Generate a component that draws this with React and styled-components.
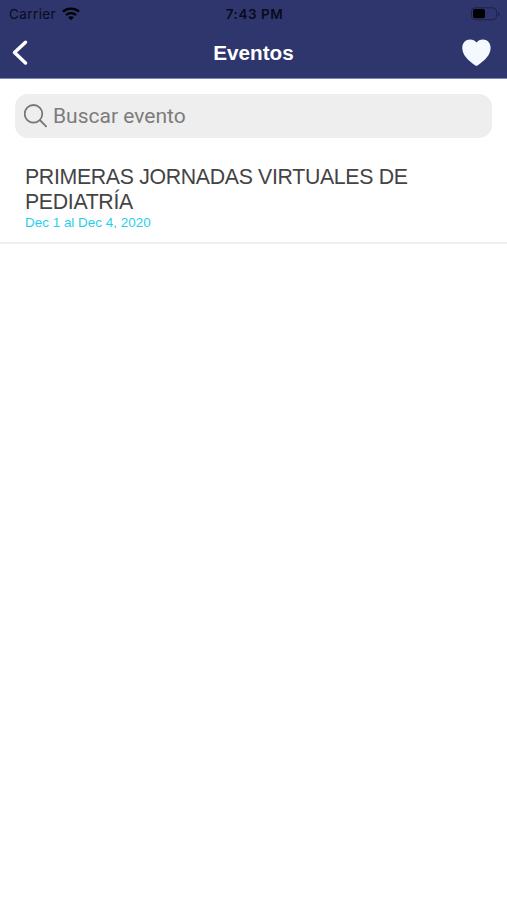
import { useState } from 'react';
import styled, { createGlobalStyle } from 'styled-components';

const GlobalStyle = createGlobalStyle`
  * {
    box-sizing: border-box;
  }
  body {
    margin: 0;
    background-color: #fff;
    font-family: 'Liberation Sans', Arial, sans-serif;
  }
`;

const Screen = styled.div`
  width: 100%;
  min-height: 100vh;
  background-color: #fff;
`;

const Header = styled.header`
  height: 79px;
  background-color: #2f366d;
  border-bottom: 1px solid #7e88b8;
`;

const StatusBar = styled.div`
  height: 27px;
  padding: 0 7px 0 9px;
  display: grid;
  grid-template-columns: 1fr auto 1fr;
  align-items: center;
  color: #080b1c;
  font-family: Inter, 'Liberation Sans', sans-serif;
  font-size: 13.5px;
`;

const Carrier = styled.div`
  display: flex;
  align-items: center;
  gap: 6px;
  letter-spacing: 0.4px;
`;

const Time = styled.div`
  font-size: 13.5px;
  font-weight: 600;
  letter-spacing: 0.55px;
`;

const Battery = styled.svg`
  justify-self: end;
`;

const NavBar = styled.div`
  height: 51px;
  padding: 0 16px 0 10px;
  display: grid;
  grid-template-columns: 1fr auto 1fr;
  align-items: center;
`;

const NavButton = styled.button`
  display: flex;
  padding: 0;
  border: 0;
  background: none;
  justify-self: ${(props) => props.$side};
`;

const Title = styled.h1`
  margin: 0;
  padding-left: 6px;
  padding-top: 1px;
  color: #fff;
  font-size: 20.7px;
  font-weight: bold;
  line-height: 24px;
`;

const SearchBox = styled.label`
  height: 44px;
  margin: 15px 15px 0;
  padding: 0 9px;
  display: flex;
  align-items: center;
  gap: 5px;
  background-color: #eee;
  border-radius: 13px;
`;

const SearchInput = styled.input`
  flex: 1;
  padding: 0;
  border: 0;
  outline: 0;
  background: none;
  color: #444;
  font-family: Roboto, sans-serif;
  font-size: 21px;
  &::placeholder {
    color: #7c7c7c;
  }
`;

const EventItem = styled.article`
  height: 106px;
  padding: 27px 60px 0 25px;
  border-bottom: 2px solid #eee;
`;

const EventName = styled.h2`
  margin: 0;
  color: #444;
  font-size: 21.3px;
  font-weight: normal;
  letter-spacing: -0.33px;
  line-height: 24.5px;
`;

const EventDate = styled.div`
  color: #1fd0ea;
  font-size: 13.4px;
  letter-spacing: 0.03px;
  line-height: 17px;
`;

const events = [
  {
    id: 1,
    name: 'PRIMERAS JORNADAS VIRTUALES DE PEDIATRÍA',
    date: 'Dec 1 al Dec 4, 2020',
  },
];

const App = () => {
  const [search, setSearch] = useState('');
  const shown = events.filter((e) =>
    e.name.toLowerCase().includes(search.toLowerCase())
  );
  return (
    <Screen>
      <GlobalStyle />
      <Header>
        <StatusBar>
          <Carrier>
            Carrier
            <svg width="18" height="14" viewBox="0 0 18 14" fill="none">
              <path
                d="M1 4.600C5.500.600 12.500.600 17 4.600M4 8c2.800-2.600 7.200-2.600 10 0"
                stroke="#000"
                strokeWidth="2.3"
              />
              <path d="M9 13.2 6.200 10.300c1.600-1.500 4-1.500 5.600 0z" fill="#000" />
            </svg>
          </Carrier>
          <Time>7:43 PM</Time>
          <Battery width="30" height="14" viewBox="0 0 30 14">
            <rect
              x="1.5"
              y="0.8"
              width="25"
              height="12"
              rx="3.5"
              fill="none"
              stroke="#1d2249"
            />
            <rect x="3" y="2" width="12" height="9.200" rx="2" fill="#000" />
            <path d="M28 5v4.400c1-.4 1.600-1.200 1.600-2.200S29 5.400 28 5z" fill="#1d2249" />
          </Battery>
        </StatusBar>
        <NavBar>
          <NavButton $side="start" aria-label="Volver">
            <svg width="20" height="28" viewBox="0 0 20 28" fill="none">
              <path
                d="M15.500 3.300 4.500 13.500 15.500 24"
                stroke="#fff"
                strokeWidth="3.500"
                strokeLinecap="round"
                strokeLinejoin="round"
              />
            </svg>
          </NavButton>
          <Title>Eventos</Title>
          <NavButton $side="end" aria-label="Favoritos">
            <svg width="30" height="28" viewBox="0 0 30 28">
              <path
                d="M15.500 3.600C14 1.600 11.800.600 9.200.600 4.700.600 1.300 4 1.300 9c0 7.200 6.200 12.600 12.700 17.200.9.700 1.900.7 2.800 0C23.400 21.600 29.600 16.200 29.600 9c0-5-3.400-8.400-7.800-8.400-2.600 0-4.800 1-6.300 3z"
                fill="#f4f8ff"
              />
            </svg>
          </NavButton>
        </NavBar>
      </Header>
      <SearchBox>
        <svg width="24" height="24" viewBox="0 0 24 24" fill="none">
          <path
            d="M18.300 9.800a8.800 8.800 0 1 1-17.600 0 8.800 8.800 0 0 1 17.600 0zM15.800 16l6.300 6.300"
            stroke="#777"
            strokeWidth="1.8"
            strokeLinecap="round"
          />
        </svg>
        <SearchInput
          placeholder="Buscar evento"
          value={search}
          onChange={(e) => setSearch(e.target.value)}
        />
      </SearchBox>
      {shown.map((e) => (
        <EventItem key={e.id}>
          <EventName>{e.name}</EventName>
          <EventDate>{e.date}</EventDate>
        </EventItem>
      ))}
    </Screen>
  );
};

export default App;
